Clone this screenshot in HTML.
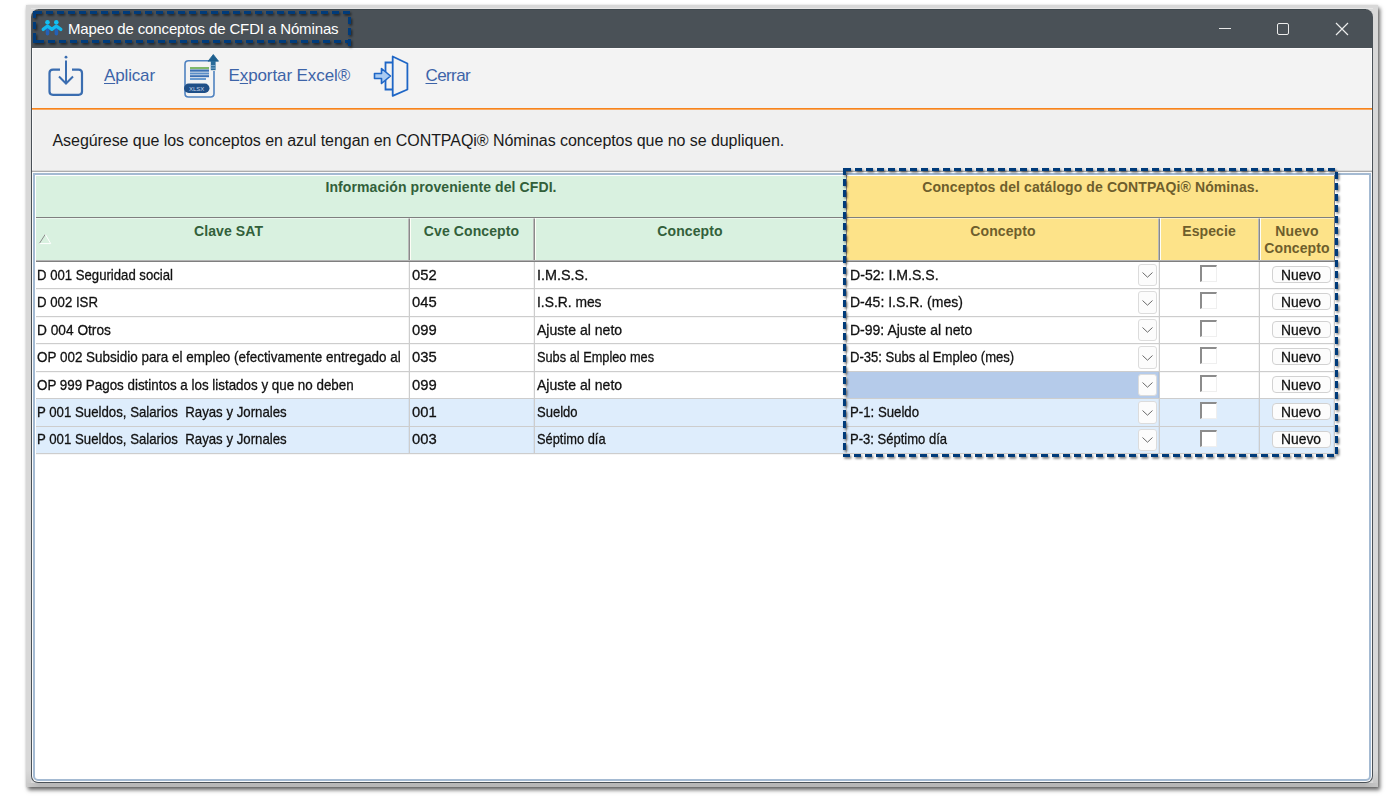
<!DOCTYPE html>
<html><head><meta charset="utf-8"><title>Mapeo de conceptos de CFDI a Nóminas</title>
<style>
html,body{margin:0;padding:0;}
body{width:1387px;height:796px;position:relative;overflow:hidden;background:#fff;font-family:"Liberation Sans", sans-serif;}
.r{position:absolute;}
.t{position:absolute;white-space:pre;}
.d{-webkit-text-stroke:0.3px #111;}
u{text-decoration:underline;text-underline-offset:2px;}
</style></head><body>
<div class="r" style="left:26px;top:5px;width:1352px;height:782px;background:#d8d8d8;box-shadow:2px 3px 4px rgba(0,0,0,.6), 0 0 2px rgba(0,0,0,.12);"></div>
<div class="r" style="left:26px;top:783px;width:1352px;height:4px;background:linear-gradient(to right,#cdcdcd 0,#b8b8b8 14px,#b6b6b6 calc(100% - 14px),#c6c6c6 100%);"></div>
<div class="r" style="left:26px;top:770px;width:5px;height:13px;background:linear-gradient(#d8d8d8,#cccccc);"></div>
<div class="r" style="left:1373px;top:770px;width:5px;height:13px;background:linear-gradient(#d8d8d8,#c8c8c8);"></div>
<div class="r" style="left:31px;top:8px;width:1342px;height:1px;background:#e4e4e4;"></div>
<div class="r" style="left:31px;top:9px;width:1342px;height:774px;background:#4a5157;border-radius:8px 8px 7px 7px;"></div>
<div class="r" style="left:38px;top:9px;width:1328px;height:1px;background:#3f484d;"></div>
<div class="r" style="left:32px;top:48px;width:1340px;height:734px;background:#fbfbfb;border-radius:0 0 6px 6px;"></div>
<div class="r" style="left:33px;top:49px;width:1338px;height:59px;background:#f3f3f3;"></div>
<div class="r" style="left:32px;top:108px;width:1340px;height:1px;background:#f7841c;"></div>
<div class="r" style="left:32px;top:109px;width:1340px;height:1px;background:#f8a860;"></div>
<div class="r" style="left:33px;top:110px;width:1338px;height:61px;background:#f0f0f0;"></div>
<div class="r" style="left:32px;top:170px;width:1340px;height:1px;background:#dadada;"></div>
<div class="r" style="left:32px;top:171px;width:1340px;height:1px;background:#acacac;"></div>
<div class="r" style="left:33px;top:172px;width:1338px;height:609px;background:#fdfdfd;border-radius:0 0 5px 5px;"></div>
<div class="r" style="left:33px;top:173px;width:1338px;height:608px;box-sizing:border-box;border:2px solid #a4bad2;background:#fff;border-radius:0 0 5px 5px;"></div>
<svg class="r" style="left:38px;top:16px" width="28" height="22" viewBox="0 0 28 22"><rect x="7.7" y="11" width="3.6" height="8.6" rx="1.8" fill="#2461b6"/><rect x="16.6" y="11" width="3.6" height="8.6" rx="1.8" fill="#2461b6"/><path d="M5.2 13.4 L9.5 10 L13.9 13.4 L18.3 10 L22.8 13.4" fill="none" stroke="#13b9ee" stroke-width="3.3" stroke-linecap="round" stroke-linejoin="round"/><circle cx="9.5" cy="6.2" r="2.3" fill="#12c0f2"/><circle cx="18.3" cy="6.2" r="2.3" fill="#12c0f2"/></svg>
<div class="t" style="left:68px;top:20.60px;font-size:15px;line-height:15px;color:#ffffff;font-weight:normal;letter-spacing:-0.13px;">Mapeo de conceptos de CFDI a Nóminas</div>
<div class="r" style="left:1219px;top:28px;width:12px;height:1px;background:#e8e8e8;"></div>
<div class="r" style="left:1277px;top:23px;width:12px;height:12px;box-sizing:border-box;border:1.2px solid #ececec;border-radius:2px;"></div>
<svg class="r" style="left:1335px;top:22px" width="14" height="14" viewBox="0 0 14 14"><path d="M1 1 L13 13 M13 1 L1 13" stroke="#ececec" stroke-width="1.2"/></svg>
<svg class="r" style="left:46px;top:55px" width="40" height="44" viewBox="0 0 40 44"><path d="M14 14.6 H7 Q3.5 14.6 3.5 18.1 V36.5 Q3.5 39.8 7 39.8 H32.5 Q36 39.8 36 36.5 V18.1 Q36 14.6 32.5 14.6 H26" fill="none" stroke="#3a6db0" stroke-width="2.2"/><circle cx="20" cy="2.2" r="1.4" fill="#3a6db0"/><path d="M20 5.5 V28.5 M13 21.5 L20 28.5 L27 21.5" fill="none" stroke="#3a6db0" stroke-width="2"/></svg>
<div class="t" style="left:104px;top:67.11px;font-size:17px;line-height:17px;color:#3d64a8;font-weight:normal;letter-spacing:-0.15px;"><u>A</u>plicar</div>
<svg class="r" style="left:182px;top:53px" width="40" height="46" viewBox="0 0 40 46"><path d="M27 7.8 H6.5 Q3 7.8 3 11.3 V40.5 Q3 44 6.5 44 H28.5 Q32 44 32 40.5 V18" fill="none" stroke="#4f82c0" stroke-width="1.6"/><rect x="8" y="14" width="19" height="2.2" fill="#7fb86a"/><rect x="8" y="16.5" width="19" height="2.2" fill="#3a6fb5"/><rect x="8" y="19.5" width="19" height="2" fill="#5b8ec8"/><rect x="8" y="22.2" width="19" height="2" fill="#3a6fb5"/><rect x="8" y="25" width="16" height="2" fill="#6a9bd0"/><rect x="2" y="30.5" width="25.5" height="9.5" rx="4.7" fill="#1f4f87"/><text x="14.7" y="38" font-family="Liberation Sans" font-size="6" fill="#c9d6ea" text-anchor="middle">XLSX</text><path d="M26.1 8.2 L31.3 1.5 L36.5 8.2 Z" fill="#1d5f8e" stroke="#1d5f8e" stroke-width="0.8" stroke-linejoin="round"/><rect x="28.8" y="8" width="4.8" height="9.2" fill="#2a6c9a"/><rect x="28.8" y="12.2" width="4.8" height="0.9" fill="#8fb6d6"/><rect x="28.8" y="14.6" width="4.8" height="0.9" fill="#8fb6d6"/></svg>
<div class="t" style="left:228.5px;top:67.11px;font-size:17px;line-height:17px;color:#3d64a8;font-weight:normal;letter-spacing:-0.1px;">E<u>x</u>portar Excel®</div>
<svg class="r" style="left:372px;top:54px" width="40" height="44" viewBox="0 0 40 44"><path d="M20.7 2.5 L35.4 9.5 V35.5 L20.7 41.8 Z" fill="none" stroke="#1e66c6" stroke-width="1.8" stroke-linejoin="round"/><path d="M20.7 8.5 H13.5 V35.5 H20.7" fill="none" stroke="#1e66c6" stroke-width="1.8"/><path d="M2.5 19.5 H9.5 V14.5 L18.5 22 L9.5 29.5 V24.5 H2.5 Z" fill="#a9cbf2" stroke="#1e66c6" stroke-width="1.6" stroke-linejoin="round"/></svg>
<div class="t" style="left:425.5px;top:67.11px;font-size:17px;line-height:17px;color:#3d64a8;font-weight:normal;letter-spacing:-0.6px;"><u>C</u>errar</div>
<div class="t" style="left:52.5px;top:132.66px;font-size:16px;line-height:16px;color:#1a1a1a;font-weight:normal;letter-spacing:-0.06px;">Asegúrese que los conceptos en azul tengan en CONTPAQi® Nóminas conceptos que no se dupliquen.</div>
<div class="r" style="left:36px;top:176px;width:810px;height:41px;background:#d9f1e0;"></div>
<div class="r" style="left:847px;top:176px;width:488px;height:41px;background:#fde389;"></div>
<div class="r" style="left:36px;top:217px;width:1299px;height:1px;background:#7f7f7f;"></div>
<div class="r" style="left:36px;top:218px;width:810px;height:43px;background:#d9f1e0;"></div>
<div class="r" style="left:847px;top:218px;width:488px;height:43px;background:#fde389;"></div>
<div class="r" style="left:36px;top:261px;width:1299px;height:1px;background:#7f7f7f;"></div>
<div class="r" style="left:408px;top:218px;width:1px;height:43px;background:#b9b9b9;"></div>
<div class="r" style="left:409px;top:218px;width:1px;height:43px;background:#8a8a8a;"></div>
<div class="r" style="left:410px;top:218px;width:1px;height:43px;background:#fdfdf6;"></div>
<div class="r" style="left:533px;top:218px;width:1px;height:43px;background:#b9b9b9;"></div>
<div class="r" style="left:534px;top:218px;width:1px;height:43px;background:#8a8a8a;"></div>
<div class="r" style="left:535px;top:218px;width:1px;height:43px;background:#fdfdf6;"></div>
<div class="r" style="left:1158px;top:218px;width:1px;height:43px;background:#b9b9b9;"></div>
<div class="r" style="left:1159px;top:218px;width:1px;height:43px;background:#8a8a8a;"></div>
<div class="r" style="left:1160px;top:218px;width:1px;height:43px;background:#fdfdf6;"></div>
<div class="r" style="left:1258px;top:218px;width:1px;height:43px;background:#b9b9b9;"></div>
<div class="r" style="left:1259px;top:218px;width:1px;height:43px;background:#8a8a8a;"></div>
<div class="r" style="left:1260px;top:218px;width:1px;height:43px;background:#fdfdf6;"></div>
<div class="r" style="left:36px;top:218px;width:1299px;height:1px;background:rgba(255,255,255,.45);"></div>
<div class="r" style="left:36px;top:260px;width:1299px;height:1px;background:#b3b3b3;"></div>
<div class="r" style="left:846px;top:175px;width:1px;height:86px;background:#7f7f7f;"></div>
<div class="r" style="left:1334px;top:175px;width:1px;height:86px;background:#7f7f7f;"></div>
<div class="t" style="left:141.00px;width:600px;text-align:center;top:179.85px;font-size:14px;line-height:14px;color:#32603a;font-weight:bold;letter-spacing:0.1px">Información proveniente del CFDI.</div>
<div class="t" style="left:790.50px;width:600px;text-align:center;top:179.85px;font-size:14px;line-height:14px;color:#6e5e2c;font-weight:bold;letter-spacing:0.1px">Conceptos del catálogo de CONTPAQi® Nóminas.</div>
<div class="t" style="left:78.50px;width:300px;text-align:center;top:223.55px;font-size:14px;line-height:14px;color:#32603a;font-weight:bold;letter-spacing:0.1px">Clave SAT</div>
<div class="t" style="left:411.50px;width:120px;text-align:center;top:223.55px;font-size:14px;line-height:14px;color:#32603a;font-weight:bold;letter-spacing:0.1px">Cve Concepto</div>
<div class="t" style="left:540.00px;width:300px;text-align:center;top:223.55px;font-size:14px;line-height:14px;color:#32603a;font-weight:bold;letter-spacing:0.1px">Concepto</div>
<div class="t" style="left:853.00px;width:300px;text-align:center;top:223.55px;font-size:14px;line-height:14px;color:#6e5e2c;font-weight:bold;letter-spacing:0.1px">Concepto</div>
<div class="t" style="left:1159.00px;width:100px;text-align:center;top:223.55px;font-size:14px;line-height:14px;color:#6e5e2c;font-weight:bold;letter-spacing:0.1px">Especie</div>
<div class="t" style="left:1257.00px;width:80px;text-align:center;top:223.55px;font-size:14px;line-height:14px;color:#6e5e2c;font-weight:bold;letter-spacing:0.1px">Nuevo</div>
<div class="t" style="left:1257.00px;width:80px;text-align:center;top:240.65px;font-size:14px;line-height:14px;color:#6e5e2c;font-weight:bold;letter-spacing:0.1px">Concepto</div>
<svg class="r" style="left:38px;top:233px" width="14" height="12" viewBox="0 0 14 12"><path d="M1.3 10.6 L7.3 1.3" stroke="#8a8a8a" stroke-width="1"/><path d="M7.3 1.3 L12.7 10.6 H1.3" fill="none" stroke="#ffffff" stroke-width="1"/></svg>
<div class="r" style="left:36px;top:288px;width:1299px;height:1px;background:#cdcdcd;"></div>
<div class="r" style="left:36px;top:289px;width:1299px;height:1px;background:rgba(0,0,0,.035);"></div>
<div class="r" style="left:409px;top:262px;width:1px;height:26px;background:#cdcdcd;"></div>
<div class="r" style="left:408px;top:262px;width:1px;height:26px;background:rgba(0,0,0,.045);"></div>
<div class="r" style="left:534px;top:262px;width:1px;height:26px;background:#cdcdcd;"></div>
<div class="r" style="left:533px;top:262px;width:1px;height:26px;background:rgba(0,0,0,.045);"></div>
<div class="r" style="left:846px;top:262px;width:1px;height:26px;background:#cdcdcd;"></div>
<div class="r" style="left:845px;top:262px;width:1px;height:26px;background:rgba(0,0,0,.045);"></div>
<div class="r" style="left:1159px;top:262px;width:1px;height:26px;background:#cdcdcd;"></div>
<div class="r" style="left:1158px;top:262px;width:1px;height:26px;background:rgba(0,0,0,.045);"></div>
<div class="r" style="left:1259px;top:262px;width:1px;height:26px;background:#cdcdcd;"></div>
<div class="r" style="left:1258px;top:262px;width:1px;height:26px;background:rgba(0,0,0,.045);"></div>
<div class="r" style="left:1334px;top:262px;width:1px;height:26px;background:#cdcdcd;"></div>
<div class="r" style="left:1333px;top:262px;width:1px;height:26px;background:rgba(0,0,0,.045);"></div>
<div class="t d" style="left:36.5px;top:266.90px;font-size:15px;line-height:15px;color:#111;font-weight:normal;letter-spacing:0px;transform:scaleX(0.8768);transform-origin:0 0;">D 001 Seguridad social</div>
<div class="t d" style="left:412px;top:266.90px;font-size:15px;line-height:15px;color:#111;font-weight:normal;letter-spacing:0px;transform:scaleX(0.9856);transform-origin:0 0;">052</div>
<div class="t d" style="left:537px;top:266.90px;font-size:15px;line-height:15px;color:#111;font-weight:normal;letter-spacing:0px;transform:scaleX(0.9596);transform-origin:0 0;">I.M.S.S.</div>
<div class="t d" style="left:850px;top:266.90px;font-size:15px;line-height:15px;color:#111;font-weight:normal;letter-spacing:0px;transform:scaleX(0.9408);transform-origin:0 0;">D-52: I.M.S.S.</div>
<div class="r" style="left:1138px;top:264px;width:19px;height:22px;box-sizing:border-box;border:1px solid #dcdcdc;border-radius:3px;background:#fcfcfc;"></div>
<svg class="r" style="left:1141px;top:271.0px" width="13" height="8" viewBox="0 0 13 8"><path d="M1.5 1.5 L6.5 6.2 L11.5 1.5" fill="none" stroke="#6a6a6a" stroke-width="1"/></svg>
<div class="r" style="left:1200px;top:264.5px;width:17px;height:17px;box-sizing:border-box;border-top:2px solid #8c8c8c;border-left:2px solid #8c8c8c;border-right:1px solid #efefef;border-bottom:1px solid #efefef;background:#fff;"></div>
<div class="r" style="left:1271.5px;top:266.2px;width:59px;height:16.6px;box-sizing:border-box;border:1px solid #d2d2d2;border-radius:4px;background:#fcfcfc;"></div>
<div class="t d" style="left:1281.2px;top:266.90px;font-size:15px;line-height:15px;color:#111;font-weight:normal;letter-spacing:0px;transform:scaleX(0.9226);transform-origin:0 0;">Nuevo</div>
<div class="r" style="left:36px;top:316px;width:1299px;height:1px;background:#cdcdcd;"></div>
<div class="r" style="left:36px;top:317px;width:1299px;height:1px;background:rgba(0,0,0,.035);"></div>
<div class="r" style="left:409px;top:289px;width:1px;height:27px;background:#cdcdcd;"></div>
<div class="r" style="left:408px;top:289px;width:1px;height:27px;background:rgba(0,0,0,.045);"></div>
<div class="r" style="left:534px;top:289px;width:1px;height:27px;background:#cdcdcd;"></div>
<div class="r" style="left:533px;top:289px;width:1px;height:27px;background:rgba(0,0,0,.045);"></div>
<div class="r" style="left:846px;top:289px;width:1px;height:27px;background:#cdcdcd;"></div>
<div class="r" style="left:845px;top:289px;width:1px;height:27px;background:rgba(0,0,0,.045);"></div>
<div class="r" style="left:1159px;top:289px;width:1px;height:27px;background:#cdcdcd;"></div>
<div class="r" style="left:1158px;top:289px;width:1px;height:27px;background:rgba(0,0,0,.045);"></div>
<div class="r" style="left:1259px;top:289px;width:1px;height:27px;background:#cdcdcd;"></div>
<div class="r" style="left:1258px;top:289px;width:1px;height:27px;background:rgba(0,0,0,.045);"></div>
<div class="r" style="left:1334px;top:289px;width:1px;height:27px;background:#cdcdcd;"></div>
<div class="r" style="left:1333px;top:289px;width:1px;height:27px;background:rgba(0,0,0,.045);"></div>
<div class="t d" style="left:36.5px;top:294.33px;font-size:15px;line-height:15px;color:#111;font-weight:normal;letter-spacing:0px;transform:scaleX(0.8811);transform-origin:0 0;">D 002 ISR</div>
<div class="t d" style="left:412px;top:294.33px;font-size:15px;line-height:15px;color:#111;font-weight:normal;letter-spacing:0px;transform:scaleX(0.9856);transform-origin:0 0;">045</div>
<div class="t d" style="left:537px;top:294.33px;font-size:15px;line-height:15px;color:#111;font-weight:normal;letter-spacing:0px;transform:scaleX(0.9215);transform-origin:0 0;">I.S.R. mes</div>
<div class="t d" style="left:850px;top:294.33px;font-size:15px;line-height:15px;color:#111;font-weight:normal;letter-spacing:0px;transform:scaleX(0.9344);transform-origin:0 0;">D-45: I.S.R. (mes)</div>
<div class="r" style="left:1138px;top:291px;width:19px;height:23px;box-sizing:border-box;border:1px solid #dcdcdc;border-radius:3px;background:#fcfcfc;"></div>
<svg class="r" style="left:1141px;top:298.5px" width="13" height="8" viewBox="0 0 13 8"><path d="M1.5 1.5 L6.5 6.2 L11.5 1.5" fill="none" stroke="#6a6a6a" stroke-width="1"/></svg>
<div class="r" style="left:1200px;top:291.5px;width:17px;height:17px;box-sizing:border-box;border-top:2px solid #8c8c8c;border-left:2px solid #8c8c8c;border-right:1px solid #efefef;border-bottom:1px solid #efefef;background:#fff;"></div>
<div class="r" style="left:1271.5px;top:293.2px;width:59px;height:16.6px;box-sizing:border-box;border:1px solid #d2d2d2;border-radius:4px;background:#fcfcfc;"></div>
<div class="t d" style="left:1281.2px;top:294.33px;font-size:15px;line-height:15px;color:#111;font-weight:normal;letter-spacing:0px;transform:scaleX(0.9226);transform-origin:0 0;">Nuevo</div>
<div class="r" style="left:36px;top:343px;width:1299px;height:1px;background:#cdcdcd;"></div>
<div class="r" style="left:36px;top:344px;width:1299px;height:1px;background:rgba(0,0,0,.035);"></div>
<div class="r" style="left:409px;top:317px;width:1px;height:26px;background:#cdcdcd;"></div>
<div class="r" style="left:408px;top:317px;width:1px;height:26px;background:rgba(0,0,0,.045);"></div>
<div class="r" style="left:534px;top:317px;width:1px;height:26px;background:#cdcdcd;"></div>
<div class="r" style="left:533px;top:317px;width:1px;height:26px;background:rgba(0,0,0,.045);"></div>
<div class="r" style="left:846px;top:317px;width:1px;height:26px;background:#cdcdcd;"></div>
<div class="r" style="left:845px;top:317px;width:1px;height:26px;background:rgba(0,0,0,.045);"></div>
<div class="r" style="left:1159px;top:317px;width:1px;height:26px;background:#cdcdcd;"></div>
<div class="r" style="left:1158px;top:317px;width:1px;height:26px;background:rgba(0,0,0,.045);"></div>
<div class="r" style="left:1259px;top:317px;width:1px;height:26px;background:#cdcdcd;"></div>
<div class="r" style="left:1258px;top:317px;width:1px;height:26px;background:rgba(0,0,0,.045);"></div>
<div class="r" style="left:1334px;top:317px;width:1px;height:26px;background:#cdcdcd;"></div>
<div class="r" style="left:1333px;top:317px;width:1px;height:26px;background:rgba(0,0,0,.045);"></div>
<div class="t d" style="left:36.5px;top:321.76px;font-size:15px;line-height:15px;color:#111;font-weight:normal;letter-spacing:0px;transform:scaleX(0.9137);transform-origin:0 0;">D 004 Otros</div>
<div class="t d" style="left:412px;top:321.76px;font-size:15px;line-height:15px;color:#111;font-weight:normal;letter-spacing:0px;transform:scaleX(0.9856);transform-origin:0 0;">099</div>
<div class="t d" style="left:537px;top:321.76px;font-size:15px;line-height:15px;color:#111;font-weight:normal;letter-spacing:0px;transform:scaleX(0.9368);transform-origin:0 0;">Ajuste al neto</div>
<div class="t d" style="left:850px;top:321.76px;font-size:15px;line-height:15px;color:#111;font-weight:normal;letter-spacing:0px;transform:scaleX(0.934);transform-origin:0 0;">D-99: Ajuste al neto</div>
<div class="r" style="left:1138px;top:319px;width:19px;height:22px;box-sizing:border-box;border:1px solid #dcdcdc;border-radius:3px;background:#fcfcfc;"></div>
<svg class="r" style="left:1141px;top:326.0px" width="13" height="8" viewBox="0 0 13 8"><path d="M1.5 1.5 L6.5 6.2 L11.5 1.5" fill="none" stroke="#6a6a6a" stroke-width="1"/></svg>
<div class="r" style="left:1200px;top:319.5px;width:17px;height:17px;box-sizing:border-box;border-top:2px solid #8c8c8c;border-left:2px solid #8c8c8c;border-right:1px solid #efefef;border-bottom:1px solid #efefef;background:#fff;"></div>
<div class="r" style="left:1271.5px;top:321.2px;width:59px;height:16.6px;box-sizing:border-box;border:1px solid #d2d2d2;border-radius:4px;background:#fcfcfc;"></div>
<div class="t d" style="left:1281.2px;top:321.76px;font-size:15px;line-height:15px;color:#111;font-weight:normal;letter-spacing:0px;transform:scaleX(0.9226);transform-origin:0 0;">Nuevo</div>
<div class="r" style="left:36px;top:371px;width:1299px;height:1px;background:#cdcdcd;"></div>
<div class="r" style="left:36px;top:372px;width:1299px;height:1px;background:rgba(0,0,0,.035);"></div>
<div class="r" style="left:409px;top:344px;width:1px;height:27px;background:#cdcdcd;"></div>
<div class="r" style="left:408px;top:344px;width:1px;height:27px;background:rgba(0,0,0,.045);"></div>
<div class="r" style="left:534px;top:344px;width:1px;height:27px;background:#cdcdcd;"></div>
<div class="r" style="left:533px;top:344px;width:1px;height:27px;background:rgba(0,0,0,.045);"></div>
<div class="r" style="left:846px;top:344px;width:1px;height:27px;background:#cdcdcd;"></div>
<div class="r" style="left:845px;top:344px;width:1px;height:27px;background:rgba(0,0,0,.045);"></div>
<div class="r" style="left:1159px;top:344px;width:1px;height:27px;background:#cdcdcd;"></div>
<div class="r" style="left:1158px;top:344px;width:1px;height:27px;background:rgba(0,0,0,.045);"></div>
<div class="r" style="left:1259px;top:344px;width:1px;height:27px;background:#cdcdcd;"></div>
<div class="r" style="left:1258px;top:344px;width:1px;height:27px;background:rgba(0,0,0,.045);"></div>
<div class="r" style="left:1334px;top:344px;width:1px;height:27px;background:#cdcdcd;"></div>
<div class="r" style="left:1333px;top:344px;width:1px;height:27px;background:rgba(0,0,0,.045);"></div>
<div class="t d" style="left:36.5px;top:349.19px;font-size:15px;line-height:15px;color:#111;font-weight:normal;letter-spacing:0px;transform:scaleX(0.8964);transform-origin:0 0;">OP 002 Subsidio para el empleo (efectivamente entregado al</div>
<div class="t d" style="left:412px;top:349.19px;font-size:15px;line-height:15px;color:#111;font-weight:normal;letter-spacing:0px;transform:scaleX(0.9856);transform-origin:0 0;">035</div>
<div class="t d" style="left:537px;top:349.19px;font-size:15px;line-height:15px;color:#111;font-weight:normal;letter-spacing:0px;transform:scaleX(0.8512);transform-origin:0 0;">Subs al Empleo mes</div>
<div class="t d" style="left:850px;top:349.19px;font-size:15px;line-height:15px;color:#111;font-weight:normal;letter-spacing:0px;transform:scaleX(0.8717);transform-origin:0 0;">D-35: Subs al Empleo (mes)</div>
<div class="r" style="left:1138px;top:346px;width:19px;height:23px;box-sizing:border-box;border:1px solid #dcdcdc;border-radius:3px;background:#fcfcfc;"></div>
<svg class="r" style="left:1141px;top:353.5px" width="13" height="8" viewBox="0 0 13 8"><path d="M1.5 1.5 L6.5 6.2 L11.5 1.5" fill="none" stroke="#6a6a6a" stroke-width="1"/></svg>
<div class="r" style="left:1200px;top:346.5px;width:17px;height:17px;box-sizing:border-box;border-top:2px solid #8c8c8c;border-left:2px solid #8c8c8c;border-right:1px solid #efefef;border-bottom:1px solid #efefef;background:#fff;"></div>
<div class="r" style="left:1271.5px;top:348.2px;width:59px;height:16.6px;box-sizing:border-box;border:1px solid #d2d2d2;border-radius:4px;background:#fcfcfc;"></div>
<div class="t d" style="left:1281.2px;top:349.19px;font-size:15px;line-height:15px;color:#111;font-weight:normal;letter-spacing:0px;transform:scaleX(0.9226);transform-origin:0 0;">Nuevo</div>
<div class="r" style="left:847px;top:372px;width:312px;height:26px;background:#b5cbea;"></div>
<div class="r" style="left:36px;top:398px;width:1299px;height:1px;background:#cdcdcd;"></div>
<div class="r" style="left:36px;top:399px;width:1299px;height:1px;background:rgba(0,0,0,.035);"></div>
<div class="r" style="left:409px;top:372px;width:1px;height:26px;background:#cdcdcd;"></div>
<div class="r" style="left:408px;top:372px;width:1px;height:26px;background:rgba(0,0,0,.045);"></div>
<div class="r" style="left:534px;top:372px;width:1px;height:26px;background:#cdcdcd;"></div>
<div class="r" style="left:533px;top:372px;width:1px;height:26px;background:rgba(0,0,0,.045);"></div>
<div class="r" style="left:846px;top:372px;width:1px;height:26px;background:#cdcdcd;"></div>
<div class="r" style="left:845px;top:372px;width:1px;height:26px;background:rgba(0,0,0,.045);"></div>
<div class="r" style="left:1159px;top:372px;width:1px;height:26px;background:#cdcdcd;"></div>
<div class="r" style="left:1158px;top:372px;width:1px;height:26px;background:rgba(0,0,0,.045);"></div>
<div class="r" style="left:1259px;top:372px;width:1px;height:26px;background:#cdcdcd;"></div>
<div class="r" style="left:1258px;top:372px;width:1px;height:26px;background:rgba(0,0,0,.045);"></div>
<div class="r" style="left:1334px;top:372px;width:1px;height:26px;background:#cdcdcd;"></div>
<div class="r" style="left:1333px;top:372px;width:1px;height:26px;background:rgba(0,0,0,.045);"></div>
<div class="t d" style="left:36.5px;top:376.62px;font-size:15px;line-height:15px;color:#111;font-weight:normal;letter-spacing:0px;transform:scaleX(0.8921);transform-origin:0 0;">OP 999 Pagos distintos a los listados y que no deben</div>
<div class="t d" style="left:412px;top:376.62px;font-size:15px;line-height:15px;color:#111;font-weight:normal;letter-spacing:0px;transform:scaleX(0.9856);transform-origin:0 0;">099</div>
<div class="t d" style="left:537px;top:376.62px;font-size:15px;line-height:15px;color:#111;font-weight:normal;letter-spacing:0px;transform:scaleX(0.9368);transform-origin:0 0;">Ajuste al neto</div>
<div class="r" style="left:1138px;top:374px;width:19px;height:22px;box-sizing:border-box;border:1px solid #dcdcdc;border-radius:3px;background:#fcfcfc;"></div>
<svg class="r" style="left:1141px;top:381.0px" width="13" height="8" viewBox="0 0 13 8"><path d="M1.5 1.5 L6.5 6.2 L11.5 1.5" fill="none" stroke="#6a6a6a" stroke-width="1"/></svg>
<div class="r" style="left:1200px;top:374.5px;width:17px;height:17px;box-sizing:border-box;border-top:2px solid #8c8c8c;border-left:2px solid #8c8c8c;border-right:1px solid #efefef;border-bottom:1px solid #efefef;background:#fff;"></div>
<div class="r" style="left:1271.5px;top:376.2px;width:59px;height:16.6px;box-sizing:border-box;border:1px solid #d2d2d2;border-radius:4px;background:#fcfcfc;"></div>
<div class="t d" style="left:1281.2px;top:376.62px;font-size:15px;line-height:15px;color:#111;font-weight:normal;letter-spacing:0px;transform:scaleX(0.9226);transform-origin:0 0;">Nuevo</div>
<div class="r" style="left:36px;top:399px;width:1299px;height:27px;background:#deedfc;"></div>
<div class="r" style="left:36px;top:426px;width:1299px;height:1px;background:#cdcdcd;"></div>
<div class="r" style="left:36px;top:427px;width:1299px;height:1px;background:rgba(0,0,0,.035);"></div>
<div class="r" style="left:409px;top:399px;width:1px;height:27px;background:#cdcdcd;"></div>
<div class="r" style="left:408px;top:399px;width:1px;height:27px;background:rgba(0,0,0,.045);"></div>
<div class="r" style="left:534px;top:399px;width:1px;height:27px;background:#cdcdcd;"></div>
<div class="r" style="left:533px;top:399px;width:1px;height:27px;background:rgba(0,0,0,.045);"></div>
<div class="r" style="left:846px;top:399px;width:1px;height:27px;background:#cdcdcd;"></div>
<div class="r" style="left:845px;top:399px;width:1px;height:27px;background:rgba(0,0,0,.045);"></div>
<div class="r" style="left:1159px;top:399px;width:1px;height:27px;background:#cdcdcd;"></div>
<div class="r" style="left:1158px;top:399px;width:1px;height:27px;background:rgba(0,0,0,.045);"></div>
<div class="r" style="left:1259px;top:399px;width:1px;height:27px;background:#cdcdcd;"></div>
<div class="r" style="left:1258px;top:399px;width:1px;height:27px;background:rgba(0,0,0,.045);"></div>
<div class="r" style="left:1334px;top:399px;width:1px;height:27px;background:#cdcdcd;"></div>
<div class="r" style="left:1333px;top:399px;width:1px;height:27px;background:rgba(0,0,0,.045);"></div>
<div class="t d" style="left:36.5px;top:404.05px;font-size:15px;line-height:15px;color:#111;font-weight:normal;letter-spacing:0px;transform:scaleX(0.8816);transform-origin:0 0;">P 001 Sueldos, Salarios&nbsp; Rayas y Jornales</div>
<div class="t d" style="left:412px;top:404.05px;font-size:15px;line-height:15px;color:#111;font-weight:normal;letter-spacing:0px;transform:scaleX(0.9856);transform-origin:0 0;">001</div>
<div class="t d" style="left:537px;top:404.05px;font-size:15px;line-height:15px;color:#111;font-weight:normal;letter-spacing:0px;transform:scaleX(0.869);transform-origin:0 0;">Sueldo</div>
<div class="t d" style="left:850px;top:404.05px;font-size:15px;line-height:15px;color:#111;font-weight:normal;letter-spacing:0px;transform:scaleX(0.8809);transform-origin:0 0;">P-1: Sueldo</div>
<div class="r" style="left:1138px;top:401px;width:19px;height:23px;box-sizing:border-box;border:1px solid #dcdcdc;border-radius:3px;background:#fcfcfc;"></div>
<svg class="r" style="left:1141px;top:408.5px" width="13" height="8" viewBox="0 0 13 8"><path d="M1.5 1.5 L6.5 6.2 L11.5 1.5" fill="none" stroke="#6a6a6a" stroke-width="1"/></svg>
<div class="r" style="left:1200px;top:401.5px;width:17px;height:17px;box-sizing:border-box;border-top:2px solid #8c8c8c;border-left:2px solid #8c8c8c;border-right:1px solid #efefef;border-bottom:1px solid #efefef;background:#fff;"></div>
<div class="r" style="left:1271.5px;top:403.2px;width:59px;height:16.6px;box-sizing:border-box;border:1px solid #d2d2d2;border-radius:4px;background:#fcfcfc;"></div>
<div class="t d" style="left:1281.2px;top:404.05px;font-size:15px;line-height:15px;color:#111;font-weight:normal;letter-spacing:0px;transform:scaleX(0.9226);transform-origin:0 0;">Nuevo</div>
<div class="r" style="left:36px;top:427px;width:1299px;height:26px;background:#deedfc;"></div>
<div class="r" style="left:36px;top:453px;width:1299px;height:1px;background:#cdcdcd;"></div>
<div class="r" style="left:36px;top:454px;width:1299px;height:1px;background:rgba(0,0,0,.035);"></div>
<div class="r" style="left:409px;top:427px;width:1px;height:26px;background:#cdcdcd;"></div>
<div class="r" style="left:408px;top:427px;width:1px;height:26px;background:rgba(0,0,0,.045);"></div>
<div class="r" style="left:534px;top:427px;width:1px;height:26px;background:#cdcdcd;"></div>
<div class="r" style="left:533px;top:427px;width:1px;height:26px;background:rgba(0,0,0,.045);"></div>
<div class="r" style="left:846px;top:427px;width:1px;height:26px;background:#cdcdcd;"></div>
<div class="r" style="left:845px;top:427px;width:1px;height:26px;background:rgba(0,0,0,.045);"></div>
<div class="r" style="left:1159px;top:427px;width:1px;height:26px;background:#cdcdcd;"></div>
<div class="r" style="left:1158px;top:427px;width:1px;height:26px;background:rgba(0,0,0,.045);"></div>
<div class="r" style="left:1259px;top:427px;width:1px;height:26px;background:#cdcdcd;"></div>
<div class="r" style="left:1258px;top:427px;width:1px;height:26px;background:rgba(0,0,0,.045);"></div>
<div class="r" style="left:1334px;top:427px;width:1px;height:26px;background:#cdcdcd;"></div>
<div class="r" style="left:1333px;top:427px;width:1px;height:26px;background:rgba(0,0,0,.045);"></div>
<div class="t d" style="left:36.5px;top:431.48px;font-size:15px;line-height:15px;color:#111;font-weight:normal;letter-spacing:0px;transform:scaleX(0.8816);transform-origin:0 0;">P 001 Sueldos, Salarios&nbsp; Rayas y Jornales</div>
<div class="t d" style="left:412px;top:431.48px;font-size:15px;line-height:15px;color:#111;font-weight:normal;letter-spacing:0px;transform:scaleX(0.9856);transform-origin:0 0;">003</div>
<div class="t d" style="left:537px;top:431.48px;font-size:15px;line-height:15px;color:#111;font-weight:normal;letter-spacing:0px;transform:scaleX(0.8566);transform-origin:0 0;">Séptimo día</div>
<div class="t d" style="left:850px;top:431.48px;font-size:15px;line-height:15px;color:#111;font-weight:normal;letter-spacing:0px;transform:scaleX(0.8693);transform-origin:0 0;">P-3: Séptimo día</div>
<div class="r" style="left:1138px;top:429px;width:19px;height:22px;box-sizing:border-box;border:1px solid #dcdcdc;border-radius:3px;background:#fcfcfc;"></div>
<svg class="r" style="left:1141px;top:436.0px" width="13" height="8" viewBox="0 0 13 8"><path d="M1.5 1.5 L6.5 6.2 L11.5 1.5" fill="none" stroke="#6a6a6a" stroke-width="1"/></svg>
<div class="r" style="left:1200px;top:429.5px;width:17px;height:17px;box-sizing:border-box;border-top:2px solid #8c8c8c;border-left:2px solid #8c8c8c;border-right:1px solid #efefef;border-bottom:1px solid #efefef;background:#fff;"></div>
<div class="r" style="left:1271.5px;top:431.2px;width:59px;height:16.6px;box-sizing:border-box;border:1px solid #d2d2d2;border-radius:4px;background:#fcfcfc;"></div>
<div class="t d" style="left:1281.2px;top:431.48px;font-size:15px;line-height:15px;color:#111;font-weight:normal;letter-spacing:0px;transform:scaleX(0.9226);transform-origin:0 0;">Nuevo</div>
<svg class="r" style="left:839px;top:164px" width="505" height="299"><defs><filter id="ds2" x="-10%" y="-10%" width="120%" height="120%"><feDropShadow dx="1.3" dy="1.6" stdDeviation="1.2" flood-color="#000" flood-opacity="0.55"/></filter></defs><g fill="#003a7a" filter="url(#ds2)"><rect x="4" y="4" width="8" height="3"/><rect x="16" y="4" width="7" height="3"/><rect x="27" y="4" width="7" height="3"/><rect x="38" y="4" width="7" height="3"/><rect x="49" y="4" width="7" height="3"/><rect x="60" y="4" width="7" height="3"/><rect x="71" y="4" width="7" height="3"/><rect x="82" y="4" width="7" height="3"/><rect x="93" y="4" width="7" height="3"/><rect x="104" y="4" width="7" height="3"/><rect x="115" y="4" width="7" height="3"/><rect x="126" y="4" width="7" height="3"/><rect x="137" y="4" width="7" height="3"/><rect x="148" y="4" width="7" height="3"/><rect x="159" y="4" width="7" height="3"/><rect x="170" y="4" width="7" height="3"/><rect x="181" y="4" width="7" height="3"/><rect x="192" y="4" width="7" height="3"/><rect x="203" y="4" width="7" height="3"/><rect x="214" y="4" width="7" height="3"/><rect x="225" y="4" width="7" height="3"/><rect x="236" y="4" width="7" height="3"/><rect x="247" y="4" width="7" height="3"/><rect x="258" y="4" width="7" height="3"/><rect x="269" y="4" width="7" height="3"/><rect x="280" y="4" width="7" height="3"/><rect x="291" y="4" width="7" height="3"/><rect x="302" y="4" width="7" height="3"/><rect x="313" y="4" width="7" height="3"/><rect x="324" y="4" width="7" height="3"/><rect x="335" y="4" width="7" height="3"/><rect x="346" y="4" width="7" height="3"/><rect x="357" y="4" width="7" height="3"/><rect x="368" y="4" width="7" height="3"/><rect x="379" y="4" width="7" height="3"/><rect x="390" y="4" width="7" height="3"/><rect x="401" y="4" width="7" height="3"/><rect x="412" y="4" width="7" height="3"/><rect x="423" y="4" width="7" height="3"/><rect x="434" y="4" width="7" height="3"/><rect x="445" y="4" width="7" height="3"/><rect x="456" y="4" width="7" height="3"/><rect x="467" y="4" width="7" height="3"/><rect x="478" y="4" width="7" height="3"/><rect x="489" y="4" width="7" height="3"/><rect x="496" y="8" width="3" height="7"/><rect x="496" y="19" width="3" height="7"/><rect x="496" y="30" width="3" height="7"/><rect x="496" y="41" width="3" height="7"/><rect x="496" y="52" width="3" height="7"/><rect x="496" y="63" width="3" height="7"/><rect x="496" y="74" width="3" height="7"/><rect x="496" y="85" width="3" height="7"/><rect x="496" y="96" width="3" height="7"/><rect x="496" y="107" width="3" height="7"/><rect x="496" y="118" width="3" height="7"/><rect x="496" y="129" width="3" height="7"/><rect x="496" y="140" width="3" height="7"/><rect x="496" y="151" width="3" height="7"/><rect x="496" y="162" width="3" height="7"/><rect x="496" y="173" width="3" height="7"/><rect x="496" y="184" width="3" height="7"/><rect x="496" y="195" width="3" height="7"/><rect x="496" y="206" width="3" height="7"/><rect x="496" y="217" width="3" height="7"/><rect x="496" y="228" width="3" height="7"/><rect x="496" y="239" width="3" height="7"/><rect x="496" y="250" width="3" height="7"/><rect x="496" y="261" width="3" height="7"/><rect x="496" y="272" width="3" height="7"/><rect x="496" y="283" width="3" height="7"/><rect x="4" y="290" width="7" height="3"/><rect x="15" y="290" width="7" height="3"/><rect x="26" y="290" width="7" height="3"/><rect x="37" y="290" width="7" height="3"/><rect x="48" y="290" width="7" height="3"/><rect x="59" y="290" width="7" height="3"/><rect x="70" y="290" width="7" height="3"/><rect x="81" y="290" width="7" height="3"/><rect x="92" y="290" width="7" height="3"/><rect x="103" y="290" width="7" height="3"/><rect x="114" y="290" width="7" height="3"/><rect x="125" y="290" width="7" height="3"/><rect x="136" y="290" width="7" height="3"/><rect x="147" y="290" width="7" height="3"/><rect x="158" y="290" width="7" height="3"/><rect x="169" y="290" width="7" height="3"/><rect x="180" y="290" width="7" height="3"/><rect x="191" y="290" width="7" height="3"/><rect x="202" y="290" width="7" height="3"/><rect x="213" y="290" width="7" height="3"/><rect x="224" y="290" width="7" height="3"/><rect x="235" y="290" width="7" height="3"/><rect x="246" y="290" width="7" height="3"/><rect x="257" y="290" width="7" height="3"/><rect x="268" y="290" width="7" height="3"/><rect x="279" y="290" width="7" height="3"/><rect x="290" y="290" width="7" height="3"/><rect x="301" y="290" width="7" height="3"/><rect x="312" y="290" width="7" height="3"/><rect x="323" y="290" width="7" height="3"/><rect x="334" y="290" width="7" height="3"/><rect x="345" y="290" width="7" height="3"/><rect x="356" y="290" width="7" height="3"/><rect x="367" y="290" width="7" height="3"/><rect x="378" y="290" width="7" height="3"/><rect x="389" y="290" width="7" height="3"/><rect x="400" y="290" width="7" height="3"/><rect x="411" y="290" width="7" height="3"/><rect x="422" y="290" width="7" height="3"/><rect x="433" y="290" width="7" height="3"/><rect x="444" y="290" width="7" height="3"/><rect x="455" y="290" width="7" height="3"/><rect x="466" y="290" width="7" height="3"/><rect x="477" y="290" width="7" height="3"/><rect x="488" y="290" width="7" height="3"/><rect x="4" y="4" width="3" height="7"/><rect x="4" y="15" width="3" height="7"/><rect x="4" y="26" width="3" height="7"/><rect x="4" y="37" width="3" height="7"/><rect x="4" y="48" width="3" height="7"/><rect x="4" y="59" width="3" height="7"/><rect x="4" y="70" width="3" height="7"/><rect x="4" y="81" width="3" height="7"/><rect x="4" y="92" width="3" height="7"/><rect x="4" y="103" width="3" height="7"/><rect x="4" y="114" width="3" height="7"/><rect x="4" y="125" width="3" height="7"/><rect x="4" y="136" width="3" height="7"/><rect x="4" y="147" width="3" height="7"/><rect x="4" y="158" width="3" height="7"/><rect x="4" y="169" width="3" height="7"/><rect x="4" y="180" width="3" height="7"/><rect x="4" y="191" width="3" height="7"/><rect x="4" y="202" width="3" height="7"/><rect x="4" y="213" width="3" height="7"/><rect x="4" y="224" width="3" height="7"/><rect x="4" y="235" width="3" height="7"/><rect x="4" y="246" width="3" height="7"/><rect x="4" y="257" width="3" height="7"/><rect x="4" y="268" width="3" height="7"/><rect x="4" y="279" width="3" height="7"/></g></svg>
<svg class="r" style="left:29px;top:7px" width="328" height="45"><defs><filter id="ds1" x="-10%" y="-10%" width="120%" height="120%"><feDropShadow dx="1.3" dy="1.6" stdDeviation="1.2" flood-color="#000" flood-opacity="0.55"/></filter></defs><g fill="#003a7a" filter="url(#ds1)"><rect x="4" y="4" width="9" height="3"/><rect x="17" y="4" width="7" height="3"/><rect x="28" y="4" width="7" height="3"/><rect x="39" y="4" width="7" height="3"/><rect x="50" y="4" width="7" height="3"/><rect x="61" y="4" width="7" height="3"/><rect x="72" y="4" width="7" height="3"/><rect x="83" y="4" width="7" height="3"/><rect x="94" y="4" width="7" height="3"/><rect x="105" y="4" width="7" height="3"/><rect x="116" y="4" width="7" height="3"/><rect x="127" y="4" width="7" height="3"/><rect x="138" y="4" width="7" height="3"/><rect x="149" y="4" width="7" height="3"/><rect x="160" y="4" width="7" height="3"/><rect x="171" y="4" width="7" height="3"/><rect x="182" y="4" width="7" height="3"/><rect x="193" y="4" width="7" height="3"/><rect x="204" y="4" width="7" height="3"/><rect x="215" y="4" width="7" height="3"/><rect x="226" y="4" width="7" height="3"/><rect x="237" y="4" width="7" height="3"/><rect x="248" y="4" width="7" height="3"/><rect x="259" y="4" width="7" height="3"/><rect x="270" y="4" width="7" height="3"/><rect x="281" y="4" width="7" height="3"/><rect x="292" y="4" width="7" height="3"/><rect x="303" y="4" width="7" height="3"/><rect x="314" y="4" width="7" height="3"/><rect x="319" y="10" width="3" height="7"/><rect x="319" y="21" width="3" height="7"/><rect x="319" y="32" width="3" height="7"/><rect x="319" y="32" width="3" height="4"/><rect x="4" y="33" width="11" height="3"/><rect x="19" y="33" width="7" height="3"/><rect x="30" y="33" width="7" height="3"/><rect x="41" y="33" width="7" height="3"/><rect x="52" y="33" width="7" height="3"/><rect x="63" y="33" width="7" height="3"/><rect x="74" y="33" width="7" height="3"/><rect x="85" y="33" width="7" height="3"/><rect x="96" y="33" width="7" height="3"/><rect x="107" y="33" width="7" height="3"/><rect x="118" y="33" width="7" height="3"/><rect x="129" y="33" width="7" height="3"/><rect x="140" y="33" width="7" height="3"/><rect x="151" y="33" width="7" height="3"/><rect x="162" y="33" width="7" height="3"/><rect x="173" y="33" width="7" height="3"/><rect x="184" y="33" width="7" height="3"/><rect x="195" y="33" width="7" height="3"/><rect x="206" y="33" width="7" height="3"/><rect x="217" y="33" width="7" height="3"/><rect x="228" y="33" width="7" height="3"/><rect x="239" y="33" width="7" height="3"/><rect x="250" y="33" width="7" height="3"/><rect x="261" y="33" width="7" height="3"/><rect x="272" y="33" width="7" height="3"/><rect x="283" y="33" width="7" height="3"/><rect x="294" y="33" width="7" height="3"/><rect x="305" y="33" width="7" height="3"/><rect x="316" y="33" width="6" height="3"/><rect x="4" y="4" width="3" height="7"/><rect x="4" y="15" width="3" height="7"/><rect x="4" y="26" width="3" height="7"/></g></svg>
</body></html>
